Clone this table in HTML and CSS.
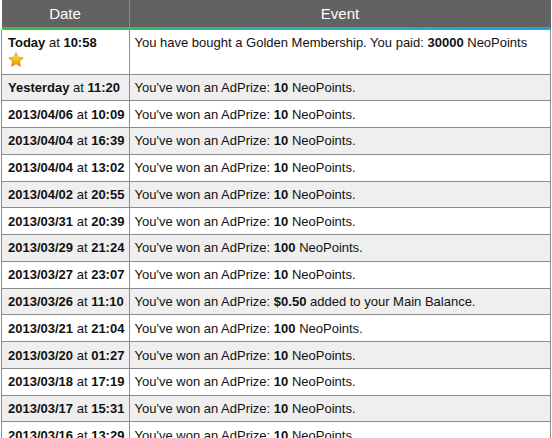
FILE: index.html
```html
<!DOCTYPE html>
<html>
<head>
<meta charset="utf-8">
<link rel="stylesheet" href="styles.css">
</head>
<body>
<table class="log">
  <thead>
    <tr><th class="c-date">Date</th><th class="c-event">Event</th></tr>
  </thead>
  <tbody>
    <tr class="first"><td class="date"><b>Today</b> at <b>10:58</b><br><svg class="star" viewBox="0 0 16 16" width="16" height="16"><defs><linearGradient id="g" x1="0" y1="0" x2="0" y2="1"><stop offset="0" stop-color="#fff27a"/><stop offset="0.6" stop-color="#f5b800"/><stop offset="1" stop-color="#e08a00"/></linearGradient></defs><path d="M8 0.8 L10.1 5.4 L15.1 5.9 L11.3 9.2 L12.4 14.3 L8 11.7 L3.6 14.3 L4.7 9.2 L0.9 5.9 L5.9 5.4 Z" fill="url(#g)" stroke="#c98a10" stroke-width="0.8" stroke-linejoin="round"/></svg></td><td>You have bought a Golden Membership. You paid: <b>30000</b> NeoPoints</td></tr>
    <tr class="alt"><td class="date"><b>Yesterday</b> at <b>11:20</b></td><td>You've won an AdPrize: <b>10</b> NeoPoints.</td></tr>
    <tr><td class="date"><b>2013/04/06</b> at <b>10:09</b></td><td>You've won an AdPrize: <b>10</b> NeoPoints.</td></tr>
    <tr class="alt"><td class="date"><b>2013/04/04</b> at <b>16:39</b></td><td>You've won an AdPrize: <b>10</b> NeoPoints.</td></tr>
    <tr><td class="date"><b>2013/04/04</b> at <b>13:02</b></td><td>You've won an AdPrize: <b>10</b> NeoPoints.</td></tr>
    <tr class="alt"><td class="date"><b>2013/04/02</b> at <b>20:55</b></td><td>You've won an AdPrize: <b>10</b> NeoPoints.</td></tr>
    <tr><td class="date"><b>2013/03/31</b> at <b>20:39</b></td><td>You've won an AdPrize: <b>10</b> NeoPoints.</td></tr>
    <tr class="alt"><td class="date"><b>2013/03/29</b> at <b>21:24</b></td><td>You've won an AdPrize: <b>100</b> NeoPoints.</td></tr>
    <tr><td class="date"><b>2013/03/27</b> at <b>23:07</b></td><td>You've won an AdPrize: <b>10</b> NeoPoints.</td></tr>
    <tr class="alt"><td class="date"><b>2013/03/26</b> at <b>11:10</b></td><td>You've won an AdPrize: <b>$0.50</b> added to your Main Balance.</td></tr>
    <tr><td class="date"><b>2013/03/21</b> at <b>21:04</b></td><td>You've won an AdPrize: <b>100</b> NeoPoints.</td></tr>
    <tr class="alt"><td class="date"><b>2013/03/20</b> at <b>01:27</b></td><td>You've won an AdPrize: <b>10</b> NeoPoints.</td></tr>
    <tr><td class="date"><b>2013/03/18</b> at <b>17:19</b></td><td>You've won an AdPrize: <b>10</b> NeoPoints.</td></tr>
    <tr class="alt"><td class="date"><b>2013/03/17</b> at <b>15:31</b></td><td>You've won an AdPrize: <b>10</b> NeoPoints.</td></tr>
    <tr><td class="date"><b>2013/03/16</b> at <b>13:29</b></td><td>You've won an AdPrize: <b>10</b> NeoPoints.</td></tr>
  </tbody>
</table>
</body>
</html>
```
FILE: styles.css
```css
html, body {
  margin: 0;
  padding: 0;
  background: #fff;
}
body {
  font-family: "Liberation Sans", Arial, sans-serif;
  color: #111;
  overflow: hidden;
}
.log {
  border-collapse: collapse;
  width: 550px;
  margin-left: 1px;
  table-layout: fixed;
}
.log th {
  height: 27px;
  padding: 0 0 3px;
  font-weight: normal;
  font-size: 15px;
  color: #fff;
  text-align: center;
  vertical-align: middle;
  border-left: 1px solid #8a8a8a;
  border-right: 1px solid #8a8a8a;
  background-color: #626262;
  background-repeat: no-repeat;
  background-position: left bottom;
  background-size: 100% 3px;
}
.log th.c-date {
  width: 127px;
  border-left: none;
  background-image: linear-gradient(to right, #3fbf45, #35bb6a);
}
.log th.c-event {
  border-right: none;
  background-image: linear-gradient(to right, #35bb6a, #26aacf 55%, #20a3dd);
}
.log td {
  font-size: 13px;
  height: 25.77px;
  padding: 0 5px;
  border: 1px solid #8c8c8c;
  vertical-align: middle;
  white-space: nowrap;
}
.log td.date {
  padding-left: 6px;
}
.log tr.first td {
  height: 44px;
  vertical-align: top;
  padding-top: 5px;
  box-sizing: border-box;
  border-top: none;
}
.log tr.alt td {
  background: #efefef;
}
.star {
  display: block;
  margin-top: 2px;
}
```
